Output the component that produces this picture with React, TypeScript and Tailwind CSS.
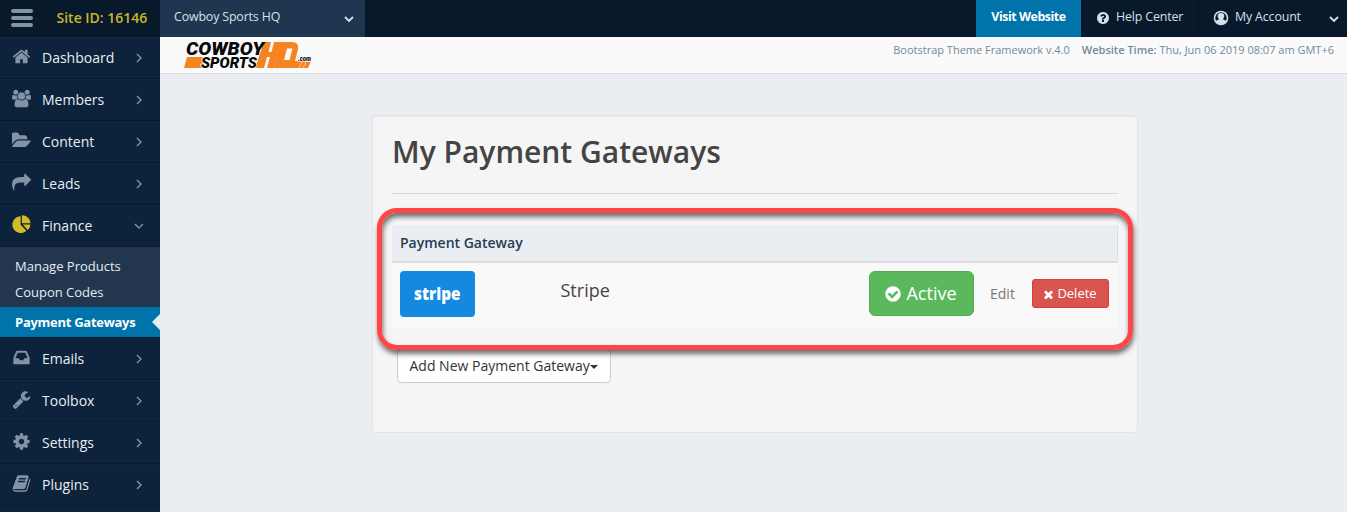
import React from "react";

const icons = {
  home: { box: "0 0 1792 1792", d: "M1472 992v480q0 26-19 45t-45 19h-384v-384h-256v384h-384q-26 0-45-19t-19-45v-480q0-1 .5-3t.5-3l575-474 575 474q1 2 1 6zm223-69l-62 74q-8 9-21 11h-3q-13 0-21-7l-692-577-692 577q-12 8-24 7-13-2-21-11l-62-74q-8-10-7-23.5t11-21.5l719-599q32-26 76-26t76 26l244 204v-195q0-14 9-23t23-9h192q14 0 23 9t9 23v408l219 182q10 8 11 21.5t-7 23.5z" },
  users: { box: "0 0 1920 1792", d: "M593 896q-162 5-265 128h-134q-82 0-138-40.5t-56-118.5q0-353 124-353 6 0 43.5 21t97.5 42.5 119 21.5q67 0 133-23-5 37-5 66 0 139 81 256zm1071 637q0 120-73 189.5t-194 69.5h-874q-121 0-194-69.5t-73-189.5q0-53 3.5-103.5t14-109 26.5-108.5 43-97.5 62-81 85.5-53.5 111.5-20q10 0 43 21.5t73 48 107 48 135 21.5 135-21.5 107-48 73-48 43-21.5q61 0 111.5 20t85.5 53.5 62 81 43 97.5 26.5 108.5 14 109 3.5 103.5zm-1024-1277q0 106-75 181t-181 75-181-75-75-181 75-181 181-75 181 75 75 181zm704 384q0 159-112.5 271.5t-271.5 112.5-271.5-112.5-112.5-271.5 112.5-271.5 271.5-112.5 271.5 112.5 112.5 271.5zm576 225q0 78-56 118.5t-138 40.5h-134q-103-123-265-128 81-117 81-256 0-29-5-66 66 23 133 23 59 0 119-21.5t97.5-42.5 43.5-21q124 0 124 353zm-128-609q0 106-75 181t-181 75-181-75-75-181 75-181 181-75 181 75 75 181z" },
  folder: { box: "0 0 1840 1792", d: "M1815 952q0 31-31 66l-336 396q-43 51-120.5 86.5t-143.5 35.5h-1088q-34 0-60.5-13t-26.5-43q0-31 31-66l336-396q43-51 120.5-86.5t143.5-35.5h1088q34 0 60.5 13t26.5 43zm-343-344v160h-832q-94 0-197 47.5t-164 119.5l-337 396-5 6q0-4-.5-12.5t-.5-12.5v-960q0-92 66-158t158-66h320q92 0 158 66t66 158v32h544q92 0 158 66t66 158z" },
  share: { box: "0 0 1792 1792", d: "M1792 640q0 26-19 45l-512 512q-19 19-45 19t-45-19-19-45v-256h-224q-98 0-175.5 6t-154 21.5-133 42.5-105.5 69.5-80 101-48.5 138.5-17.5 181q0 55 5 123 0 6 2.5 23.5t2.5 26.5q0 15-8.5 25t-23.5 10q-16 0-28-17-7-9-13-22t-13.5-30-10.5-24q-127-285-127-451 0-199 53-333 162-403 875-403h224v-256q0-26 19-45t45-19 45 19l512 512q19 19 19 45z" },
  pie: { box: "0 0 18 18", d: "M8.2 1.2v8l5.4 5.7A7.9 7.9 0 1 1 8.2 1.2zM9.4.3a8 8 0 0 1 8.2 7.5H9.4zM10.2 9h7.4a7.6 7.6 0 0 1-2.8 5.2z" },
  inbox: { box: "0 0 1792 1792", d: "M1151 960h316q-1-3-2.5-8.5t-2.5-7.5l-212-496h-708l-212 496q-1 2-2.5 7.5t-2.5 8.5h316l95 192h320zm513 30v482q0 26-19 45t-45 19h-1408q-26 0-45-19t-19-45v-482q0-62 25-123l238-552q10-25 36.5-42t52.5-17h832q26 0 52.5 17t36.5 42l238 552q25 61 25 123z" },
  wrench: { box: "0 0 1792 1792", d: "M448 1472q0-26-19-45t-45-19-45 19-19 45 19 45 45 19 45-19 19-45zm644-420l-682 682q-37 37-90 37-52 0-91-37l-106-108q-38-36-38-90 0-53 38-91l681-681q39 98 114.5 173.5t173.5 114.5zm634-435q0 39-23 106-47 134-164.5 217.5t-258.5 83.5q-185 0-316.5-131.5t-131.5-316.5 131.5-316.5 316.5-131.5q58 0 121.5 16.5t107.5 46.5q16 11 16 28t-16 28l-293 169v224l193 107q5-3 79-48.5t135.5-81 70.5-35.5q15 0 23.5 10t8.5 25z" },
  cog: { box: "0 0 1792 1792", d: "M1152 896q0-106-75-181t-181-75-181 75-75 181 75 181 181 75 181-75 75-181zm512-109v222q0 12-8 23t-20 13l-185 28q-19 54-39 91 35 50 107 138 10 12 10 25t-9 23q-27 37-99 108t-94 71q-12 0-26-9l-138-108q-44 23-91 38-16 136-29 186-7 28-36 28h-222q-14 0-24.5-8.5t-11.5-21.5l-28-184q-49-16-90-37l-141 107q-10 9-25 9-14 0-25-11-126-114-165-168-7-10-7-23 0-12 8-23 15-21 51-66.5t54-70.5q-27-50-41-99l-183-27q-13-2-21-12.5t-8-23.5v-222q0-12 8-23t19-13l186-28q14-46 39-92-40-57-107-138-10-12-10-24 0-10 9-23 26-36 98.5-107.5t94.5-71.5q13 0 26 10l138 107q44-23 91-38 16-136 29-186 7-28 36-28h222q14 0 24.5 8.5t11.5 21.5l28 184q49 16 90 37l142-107q9-9 24-9 13 0 25 10 129 119 165 170 7 8 7 22 0 12-8 23-15 21-51 66.5t-54 70.5q26 50 41 98l183 28q13 2 21 12.5t8 23.5z" },
  book: { box: "0 0 1792 1792", d: "M1703 478q40 57 18 129l-275 906q-19 64-76.5 107.5t-122.5 43.5h-923q-77 0-148.5-53.5t-99.5-131.5q-24-67-2-127 0-4 3-27t4-37q1-8-3-21.5t-3-19.5q2-11 8-21t16.5-23.5 16.5-23.5q23-38 45-91.5t30-91.5q3-10 .5-30t-.5-28q3-11 17-28t17-23q21-36 42-92t25-90q1-9-2.5-32t.5-28q4-13 22-30.5t22-22.5q19-26 42.5-84.5t27.5-96.5q1-8-3-25.5t-2-26.5q2-8 9-18t18-23 17-21q8-12 16.5-30.5t15-35 16-36 19.5-32 26.5-23.5 36-11.5 47.5 5.5l-1 3q38-9 51-9h761q74 0 114 56t18 130l-274 906q-36 119-71.5 153.5t-128.5 34.5h-869q-27 0-38 15-11 16-1 43 24 70 144 70h923q29 0 56-15.5t35-41.5l300-987q7-22 5-57 38 15 59 43zm-1064 2q-4 13 2 22.5t20 9.5h608q13 0 25.5-9.5t16.5-22.5l21-64q4-13-2-22.5t-20-9.5h-608q-13 0-25.5 9.5t-16.5 22.5zm-83 256q-4 13 2 22.5t20 9.5h608q13 0 25.5-9.5t16.5-22.5l21-64q4-13-2-22.5t-20-9.5h-608q-13 0-25.5 9.5t-16.5 22.5z" },
  question: { box: "0 0 1792 1792", d: "M1024 1376v-192q0-14-9-23t-23-9h-192q-14 0-23 9t-9 23v192q0 14 9 23t23 9h192q14 0 23-9t9-23zm256-672q0-88-55.5-163t-138.5-116-170-41q-243 0-371 213-15 24 8 42l132 100q7 6 19 6 16 0 25-12 53-68 86-92 34-24 86-24 48 0 85.5 26t37.5 59q0 38-20 61t-68 45q-63 28-115.5 86.5t-52.5 125.5v36q0 14 9 23t23 9h192q14 0 23-9t9-23q0-19 21.5-49.5t54.5-49.5q32-18 49-28.5t46-35 44.5-48 28-60.5 12.5-81zm384 192q0 209-103 385.5t-279.5 279.5-385.5 103-385.5-103-279.5-279.5-103-385.5 103-385.5 279.5-279.5 385.5-103 385.5 103 279.5 279.5 103 385.5z" },
  check: { box: "0 0 1792 1792", d: "M1412 734q0-28-18-46l-91-90q-19-19-45-19t-45 19l-408 407-226-226q-19-19-45-19t-45 19l-91 90q-18 18-18 46 0 27 18 45l362 362q19 19 45 19 27 0 46-19l543-543q18-18 18-45zm252 162q0 209-103 385.5t-279.5 279.5-385.5 103-385.5-103-279.5-279.5-103-385.5 103-385.5 279.5-279.5 385.5-103 385.5 103 279.5 279.5 103 385.5z" },
  times: { box: "0 0 1792 1792", d: "M1490 1322q0 40-28 68l-136 136q-28 28-68 28t-68-28l-294-294-294 294q-28 28-68 28t-68-28l-136-136q-28-28-28-68t28-68l294-294-294-294q-28-28-28-68t28-68l136-136q28-28 68-28t68 28l294 294 294-294q28-28 68-28t68 28l136 136q28 28 28 68t-28 68l-294 294 294 294q28 28 28 68z" },
};
type IconName = keyof typeof icons;

function Icon({ name, className }: { name: IconName; className: string }) {
  return (
    <svg viewBox={icons[name].box} className={className} fill="currentColor" aria-hidden="true">
      <path d={icons[name].d} />
    </svg>
  );
}

function Chevron({ down, className }: { down?: boolean; className: string }) {
  return (
    <svg viewBox="0 0 10 10" className={className} fill="none" stroke="currentColor" aria-hidden="true">
      <path d={down ? "M1 3l4 4 4-4" : "M3 1l4 4-4 4"} />
    </svg>
  );
}

function NavItem({ name, label, open }: { name: IconName; label: string; open?: boolean }) {
  return (
    <a className="flex h-[42px] shrink-0 items-center border-b border-[#081a2b] pl-3 text-[14px] text-[#e6edf3] shadow-[inset_0_1px_0_#10273f]">
      <Icon name={name} className={open ? "-mt-[2px] mr-[11px] h-[19px] w-[19px] text-[#d3bb25]" : "-mt-[2px] mr-[11px] h-[19px] w-[19px] text-[#8194a6]"} />
      <span className="flex-1">{label}</span>
      <Chevron down={open} className="mr-4 h-[10px] w-[10px] stroke-[1.4] text-[#8194a6]" />
    </a>
  );
}

function Logo() {
  return (
    <svg viewBox="0 0 128 30" className="h-[30px] w-32 overflow-visible" role="img" aria-label="Cowboy Sports HQ">
      <path fill="#f58420" d="M3 16h18l-3 11H0zM80 1h7l-2.5 10h3L90 1h7l-7 26h-7l3-11h-3l-3 11h-9z" />
      <path fill="#f58420" fillRule="evenodd" d="M98 1h10q7 0 6 7l-3 12h16l-3 7H90l5-21q1-5 3-5zm5 6.5L100 19h5.500l3-11.500z" />
      <path d="M115 27l3-6M119 27l3-6" stroke="#fafafa" strokeWidth=".6" />
      <g fontFamily="Roboto" fontWeight="900" fontStyle="italic" fill="#080808">
        <text x="2" y="14" fontSize="17.5" textLength="78" lengthAdjust="spacingAndGlyphs">COWBOY</text>
        <text x="17" y="26.5" fontSize="14" textLength="56" lengthAdjust="spacingAndGlyphs" stroke="#fafafa" strokeWidth="1.4" paintOrder="stroke">SPORTS</text>
        <text x="114" y="20" fontSize="6.5" textLength="13" lengthAdjust="spacingAndGlyphs" stroke="#fafafa" strokeWidth="1.4" paintOrder="stroke">.com</text>
      </g>
    </svg>
  );
}

export default function App() {
  return (
    <div className="flex h-[512px] w-full flex-col overflow-hidden bg-[#eaeef3] font-['Open_Sans','Noto_Sans',sans-serif] text-[#444]">
      <header className="flex h-[37px] shrink-0 bg-[#07192b] text-[12.4px] text-[#d5e0e9]">
        <div className="flex w-[160px] items-center pb-[3px]">
          <div className="ml-[11px] mt-[1px] flex w-[22px] flex-col gap-[3px]">
            <i className="h-1 rounded-sm bg-[#8295a5]" /><i className="h-1 rounded-sm bg-[#8295a5]" /><i className="h-1 rounded-sm bg-[#8295a5]" />
          </div>
          <span className="ml-[23.5px] text-[14px] font-semibold text-[#c9b62b]">Site ID: 16146</span>
        </div>
        <div className="flex w-[205px] items-center bg-[#20354f] pl-[14px] pb-[3px]">
          <span className="flex-1 tracking-[-0.15px]">Cowboy Sports HQ</span>
          <Chevron down className="mr-[11px] mt-[3px] h-[10px] w-[10px] stroke-[1.8]" />
        </div>
        <div className="flex-1" />
        <div className="flex w-[105px] items-center justify-center bg-[#0073aa] pb-[3px] font-bold tracking-[-0.45px] text-white">Visit Website</div>
        <div className="flex w-[118px] items-center border-r border-[#031321] pl-[15px] pb-[3px] tracking-[-0.15px]">
          <Icon name="question" className="mr-[6px] mt-[2px] h-[14px] w-[14px]" />Help Center
        </div>
        <div className="flex w-[148px] items-center pl-[14px] pb-[3px]">
          <svg viewBox="0 0 16 16" className="mr-[6px] mt-[2px] h-4 w-4" aria-hidden="true">
            <circle cx="8" cy="8" r="6.5" fill="none" stroke="currentColor" strokeWidth="1.6" />
            <path fill="currentColor" d="M8 3c4 0 4 4 2 6 0 1 2 1 4 2.5-3 4-9 4-12 0 2-1.5 4-1.5 4-2.5-2-2-2-6 2-6z" />
          </svg>
          <span className="flex-1 tracking-[-0.15px]">My Account</span>
          <Chevron down className="mr-2 mt-[3px] h-[10px] w-[10px] stroke-[1.8]" />
        </div>
      </header>
      <div className="flex min-h-0 flex-1">
        <aside className="flex w-[160px] shrink-0 flex-col overflow-hidden bg-[#0c233b]">
          <NavItem name="home" label="Dashboard" />
          <NavItem name="users" label="Members" />
          <NavItem name="folder" label="Content" />
          <NavItem name="share" label="Leads" />
          <NavItem name="pie" label="Finance" open />
          <div className="h-[60px] shrink-0 bg-[#22364e] pl-[15px] pt-[6px] text-[13px] leading-[26px] text-[#e6edf3]">
            <p>Manage Products</p>
            <p>Coupon Codes</p>
          </div>
          <div className="flex h-[30px] shrink-0 items-center justify-between bg-[#0073aa] pl-[15px] text-[13px] font-bold text-white">
            <span className="pt-[2px] tracking-[-0.28px]">Payment Gateways</span>
            <i className="border-y-8 border-r-8 border-y-transparent border-r-[#eaeef3]" />
          </div>
          <div className="h-px shrink-0 bg-[#081a2b]" />
          <NavItem name="inbox" label="Emails" />
          <NavItem name="wrench" label="Toolbox" />
          <NavItem name="cog" label="Settings" />
          <NavItem name="book" label="Plugins" />
        </aside>
        <main className="flex flex-1 flex-col">
          <div className="flex h-[37px] shrink-0 justify-between border-b border-[#d9dde2] bg-[#fafafa] pl-6 pr-[13px]">
            <div className="pt-1"><Logo /></div>
            <div className="flex gap-3 pt-[5px] text-[11px] leading-4 text-[#74899c]">
              <span>Bootstrap Theme Framework v.4.0</span>
              <span><span className="font-semibold">Website Time:</span> Thu, Jun 06 2019 08:07 am GMT+6</span>
            </div>
          </div>
          <section className="relative ml-[212px] mt-[41px] flex h-[318px] w-[766px] flex-col rounded border border-[#e3e3e3] bg-[#f5f5f5] px-[19px] shadow-[inset_0_1px_1px_rgba(0,0,0,.05)]">
            <h1 className="flex h-[78px] shrink-0 items-center border-b border-[#dadada] pb-[6px] text-[30px] font-semibold">My Payment Gateways</h1>
            <div className="mt-[31px] flex h-[38px] shrink-0 items-center border-b-2 border-r border-[#dddddf] bg-[#eaeef3] pb-[2px] pl-2 text-[14px] font-semibold text-[#253c53]">Payment Gateway</div>
            <div className="flex h-[66px] shrink-0 items-start bg-[#f9f9f9] pl-2 pr-[9px] pt-2">
              <div className="flex h-[46px] w-[75px] items-center justify-center rounded bg-[#1589df] pb-px font-['Open_Sans'] text-[18px] font-extrabold text-white"><span className="scale-x-[.85]">stripe</span></div>
              <span className="ml-[85.5px] mt-[6px] flex-1 text-[18px] leading-[26px]">Stripe</span>
              <div className="flex h-[45px] w-[105px] items-center justify-center rounded-md border border-[#4cae4c] bg-[#5cb85c] pr-[2px] text-[18px] text-white">
                <Icon name="check" className="mr-1 h-[18px] w-[18px]" />Active
              </div>
              <span className="ml-4 mt-[11px] w-[42px] text-[14px] leading-6 text-[#777]">Edit</span>
              <div className="mt-2 flex h-[29px] w-[77px] items-center justify-center rounded-[3px] border border-[#d43f3a] bg-[#d9534f] pr-[2px] text-[13px] text-white">
                <Icon name="times" className="mr-[2px] mt-[2px] h-[13px] w-[13px]" />Delete
              </div>
            </div>
            <div className="ml-[5px] mt-5 flex h-[34px] w-[214px] shrink-0 items-center rounded border border-[#ccc] bg-white pb-[2px] pl-[11.5px] text-[14px] text-[#333]">
              Add New Payment Gateway<i className="mt-[3px] border-x-4 border-t-4 border-x-transparent border-t-[#333]" />
            </div>
            <div className="absolute left-[4px] top-[92px] h-[142px] w-[756px] rounded-[20px] border-[5px] border-[#ff4545] shadow-[1px_4px_5px_rgba(0,0,0,.55),inset_1px_4px_5px_rgba(0,0,0,.55)]" />
          </section>
        </main>
      </div>
    </div>
  );
}
